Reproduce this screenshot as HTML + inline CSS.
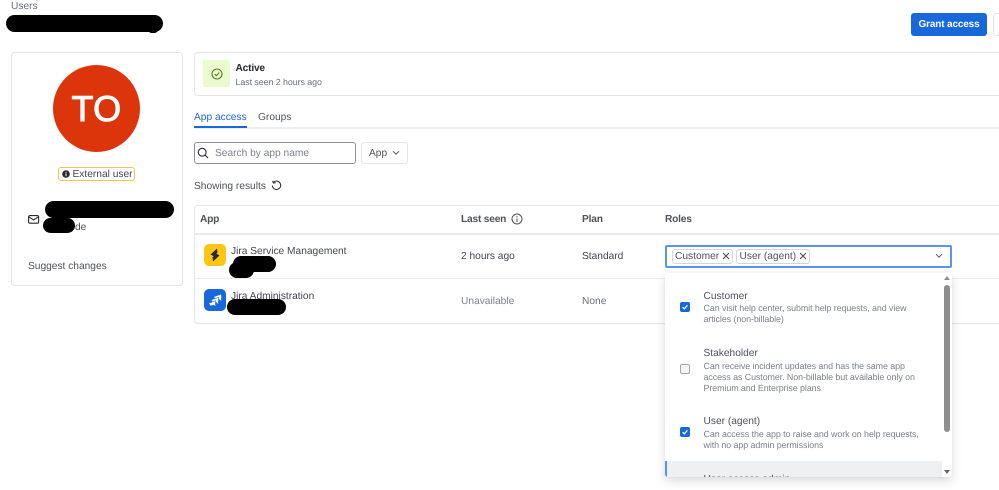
<!DOCTYPE html>
<html lang="en"><head><meta charset="utf-8"><title>User</title>
<style>
html,body{margin:0;padding:0;background:#fff}
#p{position:relative;width:999px;height:490px;overflow:hidden;background:#fff;font-family:"Liberation Sans",sans-serif;font-size:10.2px;color:#44464d;filter:blur(.25px);text-rendering:geometricPrecision}
#p div,#p span.a,#p svg{position:absolute}
.t{white-space:nowrap;line-height:12px;letter-spacing:0;margin-top:1px}
.b{background:#000;border-radius:9px}
#p .s{color:#7d8088;font-size:8.9px;letter-spacing:-.07px;margin-top:.5px}
#p .h{font-weight:bold;color:#505258;letter-spacing:-.2px}
.card{box-sizing:border-box;border:1px solid #e4e5e8;border-radius:4px;background:#fff}
.cb{box-sizing:border-box;width:10px;height:10px;border-radius:2px;background:#1868db;left:680px}
</style></head><body><div id="p">

<div class="t" style="left:11px;top:0;color:#6b6e76">Users</div>
<div class="b" style="left:6px;top:15px;width:157px;height:17px"></div>
<div class="b" style="left:148px;top:26px;width:10px;height:7px"></div>

<div style="left:911px;top:13px;width:76px;height:23px;background:#1868db;border-radius:3px"></div>
<div class="t" style="left:911px;top:17.5px;width:76px;text-align:center;color:#fff;font-weight:bold;font-size:10px;letter-spacing:-.15px">Grant access</div>
<div class="card" style="left:993px;top:13px;width:20px;height:23px;border-radius:3px"></div>

<div class="card" style="left:11px;top:52px;width:172px;height:234px"></div>
<div style="left:53px;top:65px;width:87px;height:87px;border-radius:50%;background:#dd350b"></div>
<div style="left:53px;top:87.5px;width:87px;text-align:center;color:#fff;font-size:36px;line-height:42px;letter-spacing:.3px;-webkit-text-stroke:.9px #fff">TO</div>
<div style="left:58px;top:167px;width:77px;height:14px;box-sizing:border-box;border:1px solid #e9c65a;border-radius:3px"></div>
<svg style="left:62px;top:170px" width="8" height="8" viewBox="0 0 8 8"><circle cx="4" cy="4" r="3.8" fill="#292a2e"/><rect x="3.5" y="3.4" width="1" height="2.8" fill="#fff"/><rect x="3.5" y="1.8" width="1" height="1" fill="#fff"/></svg>
<div class="t" style="left:72.5px;top:167.5px;color:#44464d">External user</div>
<svg style="left:28px;top:215px" width="12" height="10" viewBox="0 0 12 10" fill="none" stroke="#292a2e" stroke-width="1.1"><rect x=".6" y=".6" width="10" height="7.6" rx="1.2"/><path d="M.8 1.8 5.6 5 10.4 1.8"/></svg>
<div class="t" style="left:75px;top:221px;color:#505258">de</div>
<div class="b" style="left:45px;top:201px;width:129px;height:17px"></div>
<div class="b" style="left:43px;top:218px;width:32px;height:15px"></div>
<div class="t" style="left:28px;top:260px;color:#505258">Suggest changes</div>

<div class="card" style="left:194px;top:52px;width:830px;height:44px"></div>
<div style="left:203px;top:60px;width:27px;height:27px;background:#eafbd0;border-radius:2px"></div>
<svg style="left:210.5px;top:67.5px" width="12" height="12" viewBox="0 0 12 12" fill="none" stroke="#5b7f24" stroke-width="1.1"><circle cx="6" cy="6" r="5"/><path d="M3.7 6.1 5.3 7.7 8.3 4.5"/></svg>
<div class="t" style="left:235.5px;top:62px;font-weight:bold;color:#292a2e;letter-spacing:-.2px">Active</div>
<div class="t s" style="left:235.5px;top:75.5px;color:#6b6e76">Last seen 2 hours ago</div>

<div style="left:194px;top:127px;width:805px;height:2px;background:#eeeff1"></div>
<div style="left:194px;top:126px;width:53px;height:2px;background:#1868db"></div>
<div class="t" style="left:194px;top:111px;color:#1868db">App access</div>
<div class="t" style="left:258px;top:111px;color:#505258">Groups</div>

<div style="left:194px;top:142px;width:162px;height:22px;box-sizing:border-box;border:1px solid #8c8f97;border-radius:3px"></div>
<svg style="left:197px;top:147px" width="12" height="12" viewBox="0 0 12 12" fill="none" stroke="#292a2e" stroke-width="1.1"><circle cx="5.2" cy="5.2" r="3.9"/><path d="M8 8 11 11"/></svg>
<div class="t" style="left:215px;top:146.5px;color:#7d8088">Search by app name</div>
<div class="card" style="left:361px;top:142px;width:47px;height:22px;border-radius:3px"></div>
<div class="t" style="left:369px;top:146.5px;color:#505258">App</div>
<svg style="left:392px;top:150px" width="8" height="6" viewBox="0 0 8 6" fill="none" stroke="#505258" stroke-width="1"><path d="M1 1.2 4 4.2 7 1.2"/></svg>

<div class="t" style="left:194px;top:179.5px;color:#505258">Showing results</div>
<svg style="left:271px;top:180px" width="11" height="11" viewBox="0 0 11 11" fill="none" stroke="#292a2e" stroke-width="1"><path d="M2.6 2.2A4.2 4.2 0 1 1 1.3 5.6"/><path d="M1.6 .8 2.4 3 4.6 2.6"/></svg>

<div class="card" style="left:194px;top:205px;width:830px;height:118.5px"></div>
<div style="left:194px;top:233px;width:805px;height:2px;background:#e8e9eb"></div>
<div style="left:194px;top:278px;width:805px;height:1px;background:#ebecee"></div>
<div class="t h" style="left:200px;top:213px">App</div>
<div class="t h" style="left:461px;top:213px">Last seen</div>
<svg style="left:511px;top:213px" width="12" height="12" viewBox="0 0 12 12" fill="none" stroke="#505258" stroke-width="1"><circle cx="6" cy="6" r="5"/><path d="M6 5.4V9M6 3V4.2"/></svg>
<div class="t h" style="left:582px;top:213px">Plan</div>
<div class="t h" style="left:665px;top:213px">Roles</div>

<div style="left:204px;top:244px;width:22px;height:22px;border-radius:5px;background:#fec515"></div>
<svg style="left:204px;top:244px" width="22" height="22" viewBox="0 0 22 22" fill="#292a2e"><path d="M13 4.5 6.5 10.5 10 12.5 13.5 8.5ZM9 17.5 15.5 11.5 12 9.5 8.5 13.5Z"/></svg>
<div style="left:204px;top:289px;width:22px;height:22px;border-radius:5px;background:#1868db"></div>
<svg style="left:204px;top:289px" width="22" height="22" viewBox="0 0 22 22" fill="#fff" stroke="#1868db" stroke-width=".6"><path d="M9.5 7.8 17.5 5 17.5 12.5 15 10.5 11.8 11Z"/><path d="M7 11 14.5 8.4 14.5 15.5 12.2 13.6 9.2 14Z"/><path d="M4.5 14.2 11.5 11.8 11.5 17.5 9.5 16.2 6.6 17Z"/></svg>

<div class="t" style="left:231px;top:244.5px;color:#44464d">Jira Service Management</div>
<div class="b" style="left:233px;top:256px;width:43px;height:16px"></div>
<div class="b" style="left:229px;top:262px;width:25px;height:16px"></div>
<div class="t" style="left:231px;top:289.5px;color:#44464d">Jira Administration</div>
<div class="b" style="left:227px;top:299px;width:59px;height:16px"></div>

<div class="t" style="left:461px;top:250px">2 hours ago</div>
<div class="t" style="left:582px;top:250px">Standard</div>
<div class="t" style="left:461px;top:295px;color:#7d8088">Unavailable</div>
<div class="t" style="left:582px;top:295px;color:#6b6e76">None</div>

<div style="left:665px;top:245px;width:287px;height:23px;box-sizing:border-box;border:2px solid #5a93ec;border-radius:2px;background:#fff"></div>
<div style="left:671.5px;top:248.5px;width:61px;height:15px;box-sizing:border-box;border:1px solid #d5d6da;border-radius:3px"></div>
<div class="t" style="left:675px;top:249.5px;color:#505258">Customer</div>
<svg style="left:722px;top:252px" width="8" height="8" viewBox="0 0 8 8" stroke="#44464d" stroke-width="1"><path d="M1 1 7 7M7 1 1 7"/></svg>
<div style="left:735.5px;top:248.5px;width:74px;height:15px;box-sizing:border-box;border:1px solid #d5d6da;border-radius:3px"></div>
<div class="t" style="left:739.5px;top:249.5px;color:#505258">User (agent)</div>
<svg style="left:798.5px;top:252px" width="8" height="8" viewBox="0 0 8 8" stroke="#44464d" stroke-width="1"><path d="M1 1 7 7M7 1 1 7"/></svg>
<svg style="left:935px;top:253px" width="8" height="6" viewBox="0 0 8 6" fill="none" stroke="#505258" stroke-width="1"><path d="M1 1.2 4 4.2 7 1.2"/></svg>

<div style="left:665px;top:273px;width:287px;height:204px;background:#fff;border-radius:3px;box-shadow:0 4px 10px rgba(30,31,33,.16),0 0 1px rgba(30,31,33,.08);overflow:hidden">
  <div style="left:0;top:188px;width:277px;height:16px;background:#eff0f2"></div>
  <div style="left:0;top:188px;width:2px;height:16px;background:#5a92ec"></div>
  <div class="t" style="left:38.5px;top:199.5px;color:#505258">User access admin</div>
  <div style="left:279px;top:12px;width:6px;height:147px;background:#8f8f8f;border-radius:3px"></div>
  <svg style="left:279px;top:2px" width="6" height="6" viewBox="0 0 6 6" fill="#8f8f8f"><path d="M3 1 6 5H0Z"/></svg>
  <svg style="left:279px;top:196px" width="6" height="6" viewBox="0 0 6 6" fill="#666"><path d="M3 5 6 1H0Z"/></svg>
</div>

<div class="cb" style="top:302px"></div>
<svg style="left:680px;top:302px" width="10" height="10" viewBox="0 0 10 10" fill="none" stroke="#fff" stroke-width="1.2"><path d="M2.6 5.2 4.3 6.9 7.4 3.3"/></svg>
<div class="t" style="left:703.5px;top:289.5px;color:#505258">Customer</div>
<div class="t s" style="left:703.5px;top:301.5px">Can visit help center, submit help requests, and view</div>
<div class="t s" style="left:703.5px;top:312.5px">articles (non-billable)</div>

<div class="cb" style="top:364px;background:#f4f4f5;border:1px solid #a5a7ad"></div>
<div class="t" style="left:703.5px;top:347px;color:#505258">Stakeholder</div>
<div class="t s" style="left:703.5px;top:359px">Can receive incident updates and has the same app</div>
<div class="t s" style="left:703.5px;top:370px">access as Customer. Non-billable but available only on</div>
<div class="t s" style="left:703.5px;top:381px">Premium and Enterprise plans</div>

<div class="cb" style="top:427px"></div>
<svg style="left:680px;top:427px" width="10" height="10" viewBox="0 0 10 10" fill="none" stroke="#fff" stroke-width="1.2"><path d="M2.6 5.2 4.3 6.9 7.4 3.3"/></svg>
<div class="t" style="left:703.5px;top:415px;color:#505258">User (agent)</div>
<div class="t s" style="left:703.5px;top:427px">Can access the app to raise and work on help requests,</div>
<div class="t s" style="left:703.5px;top:438px">with no app admin permissions</div>

</div></body></html>
